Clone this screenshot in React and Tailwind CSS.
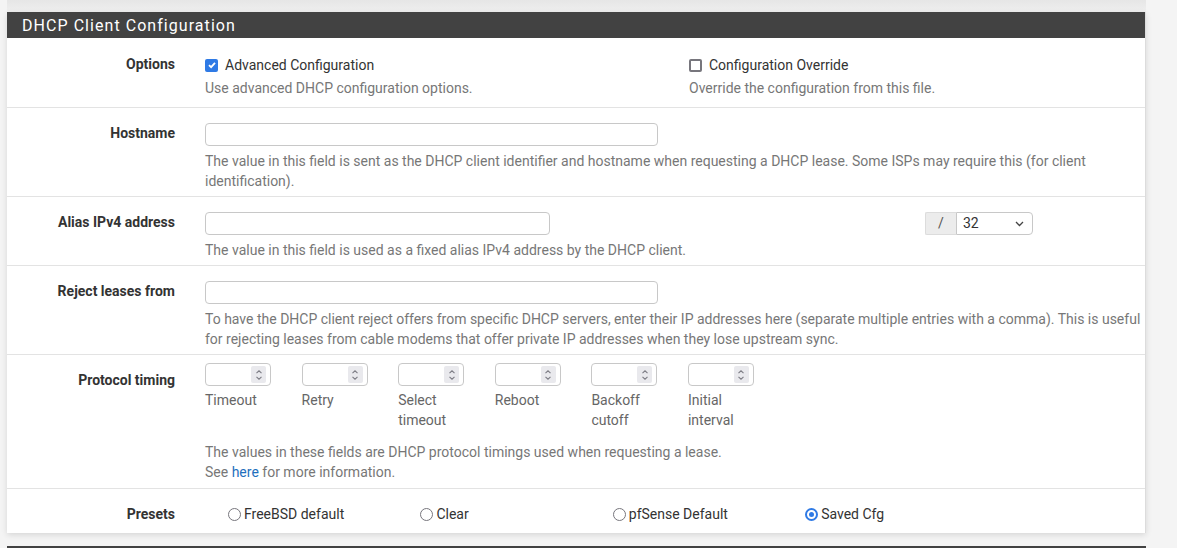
import React from "react";

const Chevrons = () => (
  <svg width="8" height="12" viewBox="0 0 8 12" fill="none" stroke="#7d7d85" strokeWidth="1.1">
    <path d="M1.5 4.2 L4 1.8 L6.5 4.2" />
    <path d="M1.5 7.8 L4 10.2 L6.5 7.8" />
  </svg>
);

const NumInput = () => (
  <div className="flex h-[23px] w-[66px] items-center justify-end rounded-[4px] border border-[#c8c8c8] bg-white pr-[4px]">
    <div className="flex h-[17px] w-[15px] items-center justify-center rounded-[2px] bg-[#e9e9ed]">
      <Chevrons />
    </div>
  </div>
);

const TextInput = ({ w }) => (
  <div className={`h-[23px] rounded-[4px] border border-[#c8c8c8] bg-white ${w}`} />
);

const Label = ({ children, pt = "pt-[15px]" }) => (
  <div className={`w-[198px] shrink-0 pr-[30px] text-right text-[14px] font-bold leading-[20px] text-[#333] ${pt}`}>
    {children}
  </div>
);

const Desc = ({ children, className = "" }) => (
  <p className={`text-[14px] leading-[20px] text-[#777] ${className}`}>{children}</p>
);

const Checkbox = ({ checked }) =>
  checked ? (
    <span className="flex h-[13px] w-[13px] items-center justify-center rounded-[2px] bg-[#2f7ae5]">
      <svg width="10" height="10" viewBox="0 0 10 10" fill="none" stroke="white" strokeWidth="1.8">
        <path d="M2 5.2 L4.1 7.2 L8 2.9" />
      </svg>
    </span>
  ) : (
    <span className="h-[13px] w-[13px] rounded-[2px] border-2 border-[#77767d] bg-white" />
  );

const Radio = ({ checked }) =>
  checked ? (
    <span className="flex h-[13px] w-[13px] items-center justify-center rounded-full border-2 border-[#2f7ae5] bg-white">
      <span className="h-[5px] w-[5px] rounded-full bg-[#2f7ae5]" />
    </span>
  ) : (
    <span className="h-[13px] w-[13px] rounded-full border-[1.5px] border-[#77767d] bg-white" />
  );

const timings = [
  ["Timeout"],
  ["Retry"],
  ["Select", "timeout"],
  ["Reboot"],
  ["Backoff", "cutoff"],
  ["Initial", "interval"],
];

const presets = [
  ["FreeBSD default", false],
  ["Clear", false],
  ["pfSense Default", false],
  ["Saved Cfg", true],
];

export default function App() {
  return (
    <div
      className="h-[548px] w-full overflow-hidden bg-[#f4f4f4] pl-[7px]"
      style={{ fontFamily: "Roboto, 'Liberation Sans', sans-serif" }}
    >
      <div className="h-[12px] w-[1139px] bg-gradient-to-b from-[#e6e6e6] to-[#efefef]" />
      <div className="w-[1139px] border-r border-[#dcdcdc] bg-white shadow-[0_2px_6px_rgba(0,0,0,0.12)]">
        <div className="flex h-[26px] items-center bg-[#424242] pl-[15px] pt-[2px]">
          <h2 className="text-[16px] font-normal tracking-[1.05px] text-white">DHCP Client Configuration</h2>
        </div>

        {/* options */}
        <div className="flex border-b border-[#e3e3e3] pb-[9px]">
          <Label pt="pt-[16px]">Options</Label>
          <div className="flex pt-[16px]">
            <div className="w-[484px]">
              <div className="flex h-[22px] items-center gap-[7px] text-[14px] text-[#333]">
                <Checkbox checked />
                <span>Advanced Configuration</span>
              </div>
              <Desc className="mt-[2px]">Use advanced DHCP configuration options.</Desc>
            </div>
            <div>
              <div className="flex h-[22px] items-center gap-[7px] text-[14px] text-[#333]">
                <Checkbox />
                <span>Configuration Override</span>
              </div>
              <Desc className="mt-[2px]">Override the configuration from this file.</Desc>
            </div>
          </div>
        </div>

        {/* hostname */}
        <div className="flex border-b border-[#e3e3e3] pb-[5px]">
          <Label>Hostname</Label>
          <div className="flex-1 pr-[4px] pt-[15px]">
            <TextInput w="w-[453px]" />
            <Desc className="mt-[5px]">
              The value in this field is sent as the DHCP client identifier and hostname when requesting a DHCP lease. Some ISPs may require this (for client identification).
            </Desc>
          </div>
        </div>

        {/* alias */}
        <div className="flex border-b border-[#e3e3e3] pb-[5px]">
          <Label>Alias IPv4 address</Label>
          <div className="flex-1 pr-[4px] pt-[15px]">
            <div className="flex">
              <TextInput w="w-[345px]" />
              <div className="ml-[375px] flex h-[23px] w-[31px] items-center justify-center rounded-l-[2px] border border-r-0 border-[#dcdcdc] bg-[#ececec] text-[14px] text-[#555]">
                /
              </div>
              <div className="flex h-[23px] w-[77px] items-center justify-between rounded-r-[4px] border border-[#c8c8c8] bg-white pl-[6px] pr-[8px] text-[14px] text-[#333]">
                <span>32</span>
                <svg width="9" height="6" viewBox="0 0 9 6" fill="none" stroke="#444" strokeWidth="1.3">
                  <path d="M1 1 L4.5 4.5 L8 1" />
                </svg>
              </div>
            </div>
            <Desc className="mt-[5px]">The value in this field is used as a fixed alias IPv4 address by the DHCP client.</Desc>
          </div>
        </div>

        {/* reject */}
        <div className="flex border-b border-[#e3e3e3] pb-[5px]">
          <Label>Reject leases from</Label>
          <div className="flex-1 pr-[4px] pt-[15px]">
            <TextInput w="w-[453px]" />
            <Desc className="mt-[5px]">
              To have the DHCP client reject offers from specific DHCP servers, enter their IP addresses here (separate multiple entries with a comma). This is useful for rejecting leases from cable modems that offer private IP addresses when they lose upstream sync.
            </Desc>
          </div>
        </div>

        {/* timing */}
        <div className="flex border-b border-[#e3e3e3] pb-[6px]">
          <Label>Protocol timing</Label>
          <div className="flex-1 pr-[4px] pt-[8px]">
            <div className="flex">
              {timings.map((t) => (
                <div key={t[0]} className="w-[96.6px]">
                  <NumInput />
                  <div className="mt-[4px] text-[14px] leading-[20px] text-[#666]">
                    {t.map((l) => (
                      <div key={l}>{l}</div>
                    ))}
                  </div>
                </div>
              ))}
            </div>
            <Desc className="mt-[12px]">
              The values in these fields are DHCP protocol timings used when requesting a lease.
              <br />
              See <span className="text-[#1f6fbd]">here</span> for more information.
            </Desc>
          </div>
        </div>

        {/* presets */}
        <div className="flex pb-[9px]">
          <Label>Presets</Label>
          <div className="flex pl-[23px] pt-[15px]">
            {presets.map(([name, on]) => (
              <div key={name} className="flex h-[20px] w-[192.4px] items-center gap-[3px] text-[14px] text-[#333]">
                <Radio checked={on} />
                <span>{name}</span>
              </div>
            ))}
          </div>
        </div>
      </div>
      <div className="mt-[13px] h-[10px] w-[1139px] bg-[#424242]" />
    </div>
  );
}
